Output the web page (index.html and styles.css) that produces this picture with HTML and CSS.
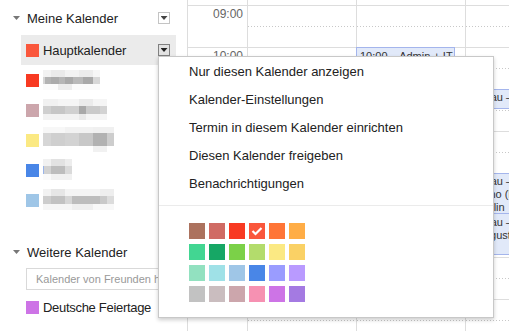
FILE: index.html
```html
<!DOCTYPE html>
<html lang="de">
<head>
<meta charset="utf-8">
<title>Kalender</title>
<link rel="stylesheet" href="styles.css">
</head>
<body>
<div class="app">
  <aside class="sidebar">
    <div class="sec-head">
      <span class="tri"></span>
      <span class="sec-title">Meine Kalender</span>
      <span class="dd"></span>
    </div>
    <ul class="cal-list">
      <li class="cal-item active"><span class="sw" style="background:#fa573c"></span><span class="name">Hauptkalender</span><span class="dd dd-hover"></span></li>
      <li class="cal-item"><span class="sw" style="background:#f83a22"></span><span class="blur b1"></span></li>
      <li class="cal-item"><span class="sw" style="background:#cca6ac"></span><span class="blur b2"></span></li>
      <li class="cal-item"><span class="sw" style="background:#fbe983"></span><span class="blur b3"></span></li>
      <li class="cal-item"><span class="sw" style="background:#4986e7"></span><span class="blur b4"></span></li>
      <li class="cal-item"><span class="sw" style="background:#9fc6e7"></span><span class="blur b5"></span></li>
    </ul>
    <div class="sec-head sec-2">
      <span class="tri"></span>
      <span class="sec-title">Weitere Kalender</span>
    </div>
    <div class="add-box"><input class="add-input" type="text" placeholder="Kalender von Freunden hinzufügen"></div>
    <div class="cal-item other"><span class="sw" style="background:#cd74e6"></span><span class="name">Deutsche Feiertage</span></div>
  </aside>

  <main class="grid">
    <div class="col time-col">
      <div class="slot first"></div>
      <div class="slot"><span class="tlabel">09:00</span></div>
      <div class="slot"><span class="tlabel">10:00</span></div>
      <div class="slot"><span class="tlabel">11:00</span></div>
      <div class="slot"><span class="tlabel">12:00</span></div>
      <div class="slot"><span class="tlabel">13:00</span></div>
      <div class="slot"><span class="tlabel">14:00</span></div>
      <div class="slot"><span class="tlabel">15:00</span></div>
      <div class="slot"><span class="tlabel">16:00</span></div>
    </div>
    <div class="col day">
      <div class="slot first"></div>
      <div class="slot"></div><div class="slot"></div><div class="slot"></div><div class="slot"></div>
      <div class="slot"></div><div class="slot"></div><div class="slot"></div><div class="slot"></div>
    </div>
    <div class="col day">
      <div class="slot first"></div>
      <div class="slot"></div><div class="slot"></div><div class="slot"></div><div class="slot"></div>
      <div class="slot"></div><div class="slot"></div><div class="slot"></div><div class="slot"></div>
      <div class="ev ev-admin">10:00 – Admin + IT</div>
    </div>
    <div class="col day">
      <div class="slot first"></div>
      <div class="slot"></div><div class="slot"></div><div class="slot"></div><div class="slot"></div>
      <div class="slot"></div><div class="slot"></div><div class="slot"></div><div class="slot"></div>
      <div class="ev ev-a">Aufbau – Admin</div>
      <div class="ev ev-b">Aufbau – Admin<br>Kasino (Raum 2)<br>i. Berlin</div>
      <div class="ev ev-c">Aufbau – Admin<br>1 August</div>
    </div>
  </main>

  <div class="menu">
    <div class="menu-item">Nur diesen Kalender anzeigen</div>
    <div class="menu-item">Kalender-Einstellungen</div>
    <div class="menu-item">Termin in diesem Kalender einrichten</div>
    <div class="menu-item">Diesen Kalender freigeben</div>
    <div class="menu-item">Benachrichtigungen</div>
    <div class="menu-sep"></div>
    <div class="swatches">
      <span class="chip" style="background:#ac725e"></span>
      <span class="chip" style="background:#d06b64"></span>
      <span class="chip" style="background:#f83a22"></span>
      <span class="chip checked" style="background:#fa573c"><svg width="16" height="16" viewBox="0 0 16 16"><polyline points="3.5,8 6.5,11 12.5,5" fill="none" stroke="#fff" stroke-width="2.2"/></svg></span>
      <span class="chip" style="background:#ff7537"></span>
      <span class="chip" style="background:#ffad46"></span>
      <span class="chip" style="background:#42d692"></span>
      <span class="chip" style="background:#16a765"></span>
      <span class="chip" style="background:#7bd148"></span>
      <span class="chip" style="background:#b3dc6c"></span>
      <span class="chip" style="background:#fbe983"></span>
      <span class="chip" style="background:#fad165"></span>
      <span class="chip" style="background:#92e1c0"></span>
      <span class="chip" style="background:#9fe1e7"></span>
      <span class="chip" style="background:#9fc6e7"></span>
      <span class="chip" style="background:#4986e7"></span>
      <span class="chip" style="background:#9a9cff"></span>
      <span class="chip" style="background:#b99aff"></span>
      <span class="chip" style="background:#c2c2c2"></span>
      <span class="chip" style="background:#cabdbf"></span>
      <span class="chip" style="background:#cca6ac"></span>
      <span class="chip" style="background:#f691b2"></span>
      <span class="chip" style="background:#cd74e6"></span>
      <span class="chip" style="background:#a47ae2"></span>
    </div>
  </div>
</div>
</body>
</html>
```

FILE: styles.css
```css
html, body {
  margin: 0;
  padding: 0;
}
body {
  font-family: "Liberation Sans", Arial, sans-serif;
  font-size: 13px;
  color: #222;
  background: #fff;
  width: 509px;
  height: 331px;
  overflow: hidden;
}
.app {
  position: relative;
  display: flex;
  height: 331px;
  overflow: hidden;
}

/* ---------- sidebar ---------- */
.sidebar {
  width: 187px;
  flex: none;
}
.sec-head {
  display: flex;
  align-items: center;
  height: 24px;
  margin-top: 6px;
  padding: 0 17px 0 13px;
}
.sec-2 {
  margin-top: 25px;
}
.tri {
  width: 7px;
  height: 4px;
  background: #777;
  clip-path: polygon(0 0, 100% 0, 50% 100%);
  margin-right: 7px;
  flex: none;
}
.sec-title {
  flex: 1;
}
.dd {
  width: 12px;
  height: 12px;
  box-sizing: border-box;
  border: 1px solid #c4c4c4;
  background: #fff;
  display: flex;
  align-items: center;
  justify-content: center;
  flex: none;
  margin-left: auto;
}
.dd::before {
  content: "";
  width: 7px;
  height: 4px;
  background: #444;
  clip-path: polygon(0 0, 100% 0, 50% 100%);
}
.dd-hover {
  border-color: #808080;
  background: #e2e2e2;
}
.dd-hover::before {
  background: #222;
}
.cal-list {
  list-style: none;
  margin: 5px 0 0;
  padding: 0;
}
.cal-item {
  display: flex;
  align-items: center;
  height: 30px;
  width: 155px;
  margin-left: 21px;
  padding: 0 6px 0 5px;
  box-sizing: border-box;
}
.cal-item.active {
  background: #ebebeb;
}
.cal-item.other {
  height: 24px;
  margin-top: 5px;
}
.sw {
  width: 13px;
  height: 13px;
  margin-right: 4px;
  flex: none;
}
.name {
  white-space: nowrap;
  letter-spacing: -0.1px;
}
.other .name {
  letter-spacing: -0.3px;
}
.blur {
  height: 22px;
  flex: none;
}
.b1 {
  width: 57px;
  background:
    linear-gradient(to right, #d6d6d6 0 2px, #b3b3b3 2px 8px, #ababab 8px 16px, #b6b6b6 16px 22px, #a9a9a9 22px 30px, #b9b9b9 30px 40px, #a8a8a8 40px 50px, #d7d7d7 50px) 0 8px / 100% 7px no-repeat,
    linear-gradient(to right, #f2f2f2 0 8px, #eaeaea 8px 22px, #f3f3f3 22px 36px, #ececec 36px 50px, #f6f6f6 50px) 0 1px / 100% 7px no-repeat,
    linear-gradient(to right, #fbfbfb 0 15px, #ececec 15px 29px, #fafafa 29px) 0 15px / 100% 6px no-repeat;
}
.b2 {
  width: 64px;
  background:
    linear-gradient(to right, #cfcfcf 0 8px, #c6c6c6 8px 22px, #d0d0d0 22px 36px, #a9a9a9 36px 43px, #cacaca 43px 57px, #d3d3d3 57px) 0 7px / 100% 8px no-repeat,
    linear-gradient(to right, #f1f1f1 0 15px, #f5f5f5 15px 36px, #ebebeb 36px 50px, #f5f5f5 50px) 0 0 / 100% 7px no-repeat,
    linear-gradient(to right, #f2f2f2 0 36px, #e9e9e9 36px 43px, #f5f5f5 43px) 0 15px / 100% 6px no-repeat;
}
.b3 {
  width: 71px;
  height: 26px;
  background:
    linear-gradient(to right, #d6d6d6 0 8px, #cfcfcf 8px 22px, #d3d3d3 22px 36px, #c8c8c8 36px 50px, #b2b2b2 50px 64px, #cdcdcd 64px) 0 6px / 100% 13px no-repeat,
    linear-gradient(to right, #f7f7f7 0 22px, #f2f2f2 22px 50px, #f0f0f0 50px) 0 0 / 100% 6px no-repeat,
    linear-gradient(to right, #fff 0 50px, #f1f1f1 50px 64px, #fff 64px) 0 19px / 100% 6px no-repeat;
}
.b4 {
  width: 29px;
  background:
    linear-gradient(to right, #9ab5ea 0 1px, #d2d2d2 1px 8px, #bdbdbd 8px 22px, #dadada 22px) 0 7px / 100% 8px no-repeat,
    linear-gradient(to right, #f1f1f1 0 8px, #e2e2e2 8px 22px, #ededed 22px) 0 0 / 100% 7px no-repeat,
    linear-gradient(to right, #fafafa 0 8px, #f1f1f1 8px) 0 15px / 100% 6px no-repeat;
}
.b5 {
  width: 71px;
  background:
    linear-gradient(to right, #cdcdcd 0 8px, #c2c2c2 8px 22px, #d6d6d6 22px 29px, #bdbdbd 29px 57px, #c9c9c9 57px 64px, #dcdcdc 64px) 0 7px / 100% 8px no-repeat,
    linear-gradient(to right, #f2f2f2 0 8px, #e6e6e6 8px 22px, #f4f4f4 22px 57px, #eeeeee 57px) 0 0 / 100% 7px no-repeat,
    linear-gradient(to right, #f6f6f6 0 29px, #efefef 29px 50px, #f8f8f8 50px) 0 15px / 100% 6px no-repeat;
}
.add-box {
  margin: 4px 0 0 26px;
}
.add-input {
  display: block;
  width: 150px;
  height: 22px;
  box-sizing: border-box;
  border: 1px solid #d9d9d9;
  padding: 0 9px;
  margin: 0;
  font-family: "Liberation Sans", Arial, sans-serif;
  font-size: 11px;
  color: #222;
  background: #fff;
  outline: none;
}
.add-input::placeholder {
  color: #999;
}

/* ---------- calendar grid ---------- */
.grid {
  display: flex;
  flex: none;
}
.col {
  position: relative;
  flex: none;
  width: 109px;
  box-sizing: border-box;
  border-right: 1px solid #ddd;
}
.time-col {
  width: 61px;
  border-left: 1px solid #ddd;
}
.slot {
  height: 42px;
  box-sizing: border-box;
  border-bottom: 1px solid #ddd;
  background-image: linear-gradient(to right, #c8c8c8 1px, transparent 1px);
  background-size: 3px 1px;
  background-repeat: repeat-x;
  background-position: 0 20px;
}
.slot.first {
  height: 6px;
  background: none;
}
.time-col .slot {
  background: none;
  text-align: right;
  padding: 1px 4px 0 0;
  font-size: 12px;
  line-height: 14px;
  color: #666;
}
.ev {
  position: absolute;
  left: 0;
  width: 108px;
  box-sizing: border-box;
  background: #e1e9f9;
  border: 1px solid #a4b5ec;
  padding: 1px 1px;
  font-size: 11px;
  line-height: 13px;
  color: #333;
  white-space: nowrap;
  overflow: hidden;
}
.ev-admin {
  left: -1px;
  top: 47px;
  width: 99px;
  height: 42px;
  padding: 2px 3px;
}
.ev-a {
  top: 89px;
  height: 20px;
}
.ev-b {
  top: 173px;
  height: 41px;
}
.ev-c {
  top: 213px;
  height: 42px;
  padding-top: 2px;
}

/* ---------- context menu ---------- */
.menu {
  position: absolute;
  left: 158px;
  top: 56px;
  width: 336px;
  height: 262px;
  box-sizing: border-box;
  background: #fff;
  border: 1px solid #c8c8c8;
  box-shadow: 0 2px 4px rgba(0, 0, 0, 0.2);
  padding-top: 1px;
}
.menu-item {
  height: 28px;
  line-height: 28px;
  padding-left: 30px;
  white-space: nowrap;
}
.menu-sep {
  height: 1px;
  background: #ebebeb;
  margin-top: 7px;
}
.swatches {
  display: grid;
  grid-template-columns: repeat(6, 16px);
  grid-auto-rows: 16px;
  gap: 5px 4px;
  margin: 17px 0 0 30px;
}
.chip {
  display: block;
  width: 16px;
  height: 16px;
}
.chip svg {
  display: block;
}
```
